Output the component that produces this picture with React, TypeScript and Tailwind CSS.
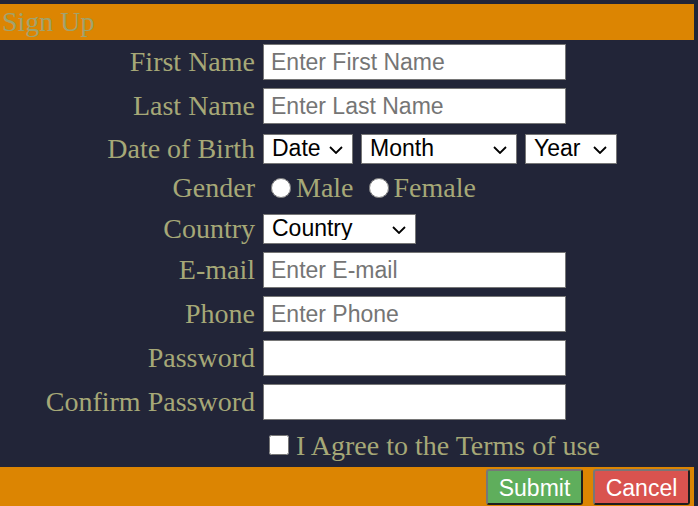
import React from 'react';

const labelCls = "text-right pr-2 text-[28px] leading-none text-[#a6a877] [font-family:'Liberation_Serif',serif]";
const inputCls = "w-[303px] h-[36px] bg-white border border-[#767676] px-[7px] text-[23px] text-black placeholder:text-[#757575] [font-family:'Liberation_Sans',Arial,sans-serif] outline-none";
const selectCls = "appearance-none h-[30px] w-full bg-white border border-[#767676] pl-[8px] pb-[2px] leading-[24px] text-[23px] text-black [font-family:'Liberation_Sans',Arial,sans-serif]";

function Row({ label, h, children }: { label: string; h: string; children: React.ReactNode }) {
  return (
    <div className={`flex items-center ${h}`}>
      <div className={`w-[263px] ${labelCls}`}>{label}</div>
      <div className="flex items-center">{children}</div>
    </div>
  );
}

// native-looking dropdown with the larger chevron seen in the picture
function Select({ w, text }: { w: string; text: string }) {
  return (
    <div className={`relative ${w}`}>
      <select className={selectCls} defaultValue="">
        <option value="">{text}</option>
      </select>
      <svg
        className="absolute right-[10px] top-[12px] pointer-events-none"
        width="14"
        height="8"
        viewBox="0 0 14 8"
        fill="none"
      >
        <path d="M1 1l6 6 6-6" stroke="#000" strokeWidth="1.8" />
      </svg>
    </div>
  );
}

export default function App() {
  return (
    <div className="w-[698px] h-[506px] overflow-hidden bg-[#222538] pt-1 pr-1">
      {/* ── Header ── */}
      <div className="h-[36px] bg-[#dc8502] flex items-center pl-[2px] text-[28px] text-[#a0a36e] [font-family:'Liberation_Serif',serif]">
        Sign Up
      </div>

      <form onSubmit={(e) => e.preventDefault()}>
        <Row label="First Name" h="h-[44px]">
          <input className={inputCls} placeholder="Enter First Name" />
        </Row>
        <Row label="Last Name" h="h-[44px]">
          <input className={inputCls} placeholder="Enter Last Name" />
        </Row>
        <Row label="Date of Birth" h="h-[40px] pt-[2px]">
          <div className="flex gap-2">
            <Select w="w-[90px]" text="Date" />
            <Select w="w-[156px]" text="Month" />
            <Select w="w-[92px]" text="Year" />
          </div>
        </Row>
        <Row label="Gender" h="h-[40px]">
          <div className="flex items-center text-[28px] text-[#a6a877] [font-family:'Liberation_Serif',serif]">
            <input type="radio" name="gender" className="ml-[8px] w-[20px] h-[20px]" />
            <span className="ml-[5px]">Male</span>
            <input type="radio" name="gender" className="ml-[15px] w-[20px] h-[20px]" />
            <span className="ml-[5px]">Female</span>
          </div>
        </Row>
        <Row label="Country" h="h-[40px] pt-[2px]">
          <Select w="w-[153px]" text="Country" />
        </Row>
        <Row label="E-mail" h="h-[44px]">
          <input className={inputCls} placeholder="Enter E-mail" />
        </Row>
        <Row label="Phone" h="h-[44px]">
          <input className={inputCls} placeholder="Enter Phone" />
        </Row>
        <Row label="Password" h="h-[44px]">
          <input type="password" className={inputCls} />
        </Row>
        <Row label="Confirm Password" h="h-[44px]">
          <input type="password" className={inputCls} />
        </Row>
        <div className="h-[43px] flex items-center pl-[269px]">
          <input type="checkbox" className="w-5 h-5 -mt-[2px]" />
          <span className="ml-[7px] text-[28px] text-[#a6a877] [font-family:'Liberation_Serif',serif]">
            I Agree to the Terms of use
          </span>
        </div>

        {/* ── Footer ── */}
        <div className="h-[45px] bg-[#dc8502] flex justify-end items-start pt-[2px] pr-[4px] gap-[10px]">
          <button
            type="submit"
            className="w-[97px] h-[36px] bg-[#5fae5c] text-white text-[23px] rounded-[3px] border-2 border-t-[#777] border-l-[#777] border-b-[#1e1e1e] border-r-[#1e1e1e] [font-family:'Liberation_Sans',Arial,sans-serif]"
          >
            Submit
          </button>
          <button
            type="button"
            className="w-[97px] h-[36px] bg-[#d9534f] text-white text-[23px] rounded-[3px] border-2 border-t-[#777] border-l-[#777] border-b-[#1e1e1e] border-r-[#1e1e1e] [font-family:'Liberation_Sans',Arial,sans-serif]"
          >
            Cancel
          </button>
        </div>
      </form>
    </div>
  );
}
